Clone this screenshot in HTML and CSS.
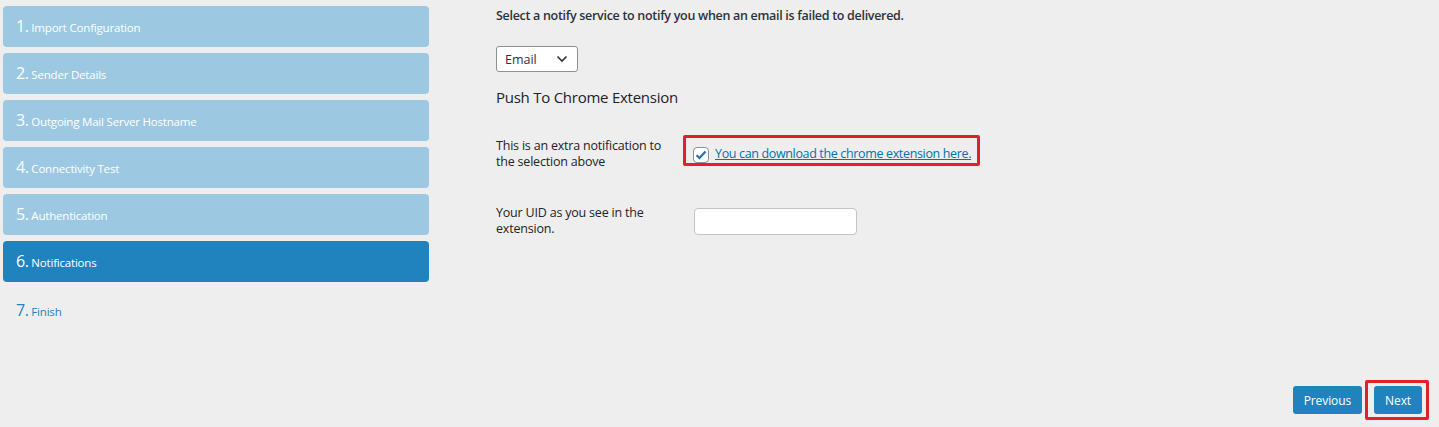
FILE: index.html
```html
<!DOCTYPE html>
<html lang="en">
<head>
<meta charset="utf-8">
<title>Setup Wizard - Notifications</title>
<link rel="stylesheet" href="styles.css">
</head>
<body>
<div class="page">
  <nav class="steps">
    <div class="step done"><span class="num">1.</span><span class="label">Import Configuration</span></div>
    <div class="step done"><span class="num">2.</span><span class="label">Sender Details</span></div>
    <div class="step done"><span class="num">3.</span><span class="label">Outgoing Mail Server Hostname</span></div>
    <div class="step done"><span class="num">4.</span><span class="label">Connectivity Test</span></div>
    <div class="step done"><span class="num">5.</span><span class="label">Authentication</span></div>
    <div class="step active"><span class="num">6.</span><span class="label">Notifications</span></div>
    <div class="step todo"><span class="num">7.</span><span class="label">Finish</span></div>
  </nav>
  <main class="content">
    <p class="intro">Select a notify service to notify you when an email is failed to delivered.</p>
    <div class="select">
      <span>Email</span>
      <svg class="chev" width="12" height="8" viewBox="0 0 12 8"><path d="M1.5 1.5 6 6l4.5-4.5" fill="none" stroke="#2c3338" stroke-width="1.6"/></svg>
    </div>
    <h3 class="section-title">Push To Chrome Extension</h3>
    <div class="form-row row-check">
      <div class="row-label">This is an extra notification to the selection above</div>
      <div class="row-field">
        <label class="highlight check-wrap">
          <span class="checkbox">
            <svg width="12" height="10" viewBox="0 0 12 10"><path d="M1.5 5.2 4.5 8 10.5 1.5" fill="none" stroke="#2271b1" stroke-width="2.2"/></svg>
          </span>
          <a class="ext-link" href="#">You can download the chrome extension here.</a>
        </label>
      </div>
    </div>
    <div class="form-row row-uid">
      <div class="row-label">Your UID as you see in the extension.</div>
      <div class="row-field">
        <span class="text-input"></span>
      </div>
    </div>
    <div class="actions">
      <span class="btn">Previous</span>
      <span class="highlight next-wrap"><span class="btn">Next</span></span>
    </div>
  </main>
</div>
</body>
</html>
```

FILE: styles.css
```css
* { box-sizing: border-box; }
html, body { margin: 0; padding: 0; }
body {
  background: #eeeeee;
  font-family: "Open Sans", "Noto Sans", sans-serif;
  color: #1d2327;
}
.page {
  display: flex;
  height: 427px;
}
.steps {
  width: 429px;
  flex-shrink: 0;
  padding: 6px 0 0 3px;
  display: flex;
  flex-direction: column;
  gap: 6px;
}
.step {
  height: 41px;
  border-radius: 4px;
  display: flex;
  align-items: baseline;
  padding: 10px 0 0 13px;
  color: #fff;
}
.step.done { background: #9dc8e2; }
.step.active { background: #2183be; }
.step.todo { color: #2183be; padding-top: 12px; }
.num { font-size: 16px; line-height: 20px; letter-spacing: -0.5px; }
.label { font-size: 11.5px; margin-left: 3px; letter-spacing: -0.2px; }
.content {
  flex: 1;
  display: flex;
  flex-direction: column;
  padding: 7px 10px 7px 67px;
}
.intro {
  margin: 0;
  font-size: 12.5px;
  font-weight: 600;
  line-height: 18px;
  color: #2c3338;
  letter-spacing: -0.3px;
}
.select {
  margin-top: 21px;
  width: 82px;
  height: 26px;
  border: 1px solid #8c8f94;
  border-radius: 3px;
  background: #fff;
  display: flex;
  align-items: center;
  justify-content: space-between;
  padding: 0 9px 0 8px;
  font-size: 12.5px;
  color: #2c3338;
}
.chev { display: block; }
.section-title {
  margin: 15px 0 0;
  font-size: 15px;
  font-weight: 400;
  line-height: 20px;
  letter-spacing: -0.25px;
  color: #1d2327;
}
.form-row {
  display: flex;
  align-items: center;
}
.row-label {
  width: 187px;
  flex-shrink: 0;
  padding-right: 14px;
  font-size: 12.5px;
  line-height: 16px;
  letter-spacing: -0.2px;
  color: #1d2327;
}
.row-check { margin-top: 28px; }
.row-uid { margin-top: 33px; }
.highlight {
  border: 3px solid #e3202a;
  border-radius: 2px;
}
.check-wrap {
  display: inline-flex;
  align-items: center;
  white-space: nowrap;
  width: 297px;
  height: 31px;
  padding: 9px 0 0 7px;
  margin-bottom: 6px;
}
.checkbox {
  flex-shrink: 0;
  width: 16px;
  height: 16px;
  border: 1px solid #8c8f94;
  border-radius: 4px;
  background: #fff;
  display: flex;
  align-items: center;
  justify-content: center;
  margin-right: 6px;
}
.checkbox svg { display: block; }
.ext-link {
  color: #0073aa;
  font-size: 12.5px;
  letter-spacing: -0.35px;
  text-decoration: underline;
  margin-top: -3px;
}
.row-uid .row-field { padding-left: 11px; }
.text-input {
  display: block;
  width: 163px;
  height: 27px;
  background: #fff;
  border: 1px solid #c3c4c7;
  border-radius: 4px;
}
.actions {
  margin-top: auto;
  display: flex;
  justify-content: flex-end;
  align-items: center;
  gap: 3px;
}
.btn {
  display: inline-flex;
  align-items: center;
  height: 28px;
  padding: 0 11px;
  background: #2183be;
  color: #fff;
  font-size: 12px;
  border-radius: 3px;
  letter-spacing: -0.1px;
}
.next-wrap {
  display: flex;
  padding: 3px 4px 3px 6px;
}
```
